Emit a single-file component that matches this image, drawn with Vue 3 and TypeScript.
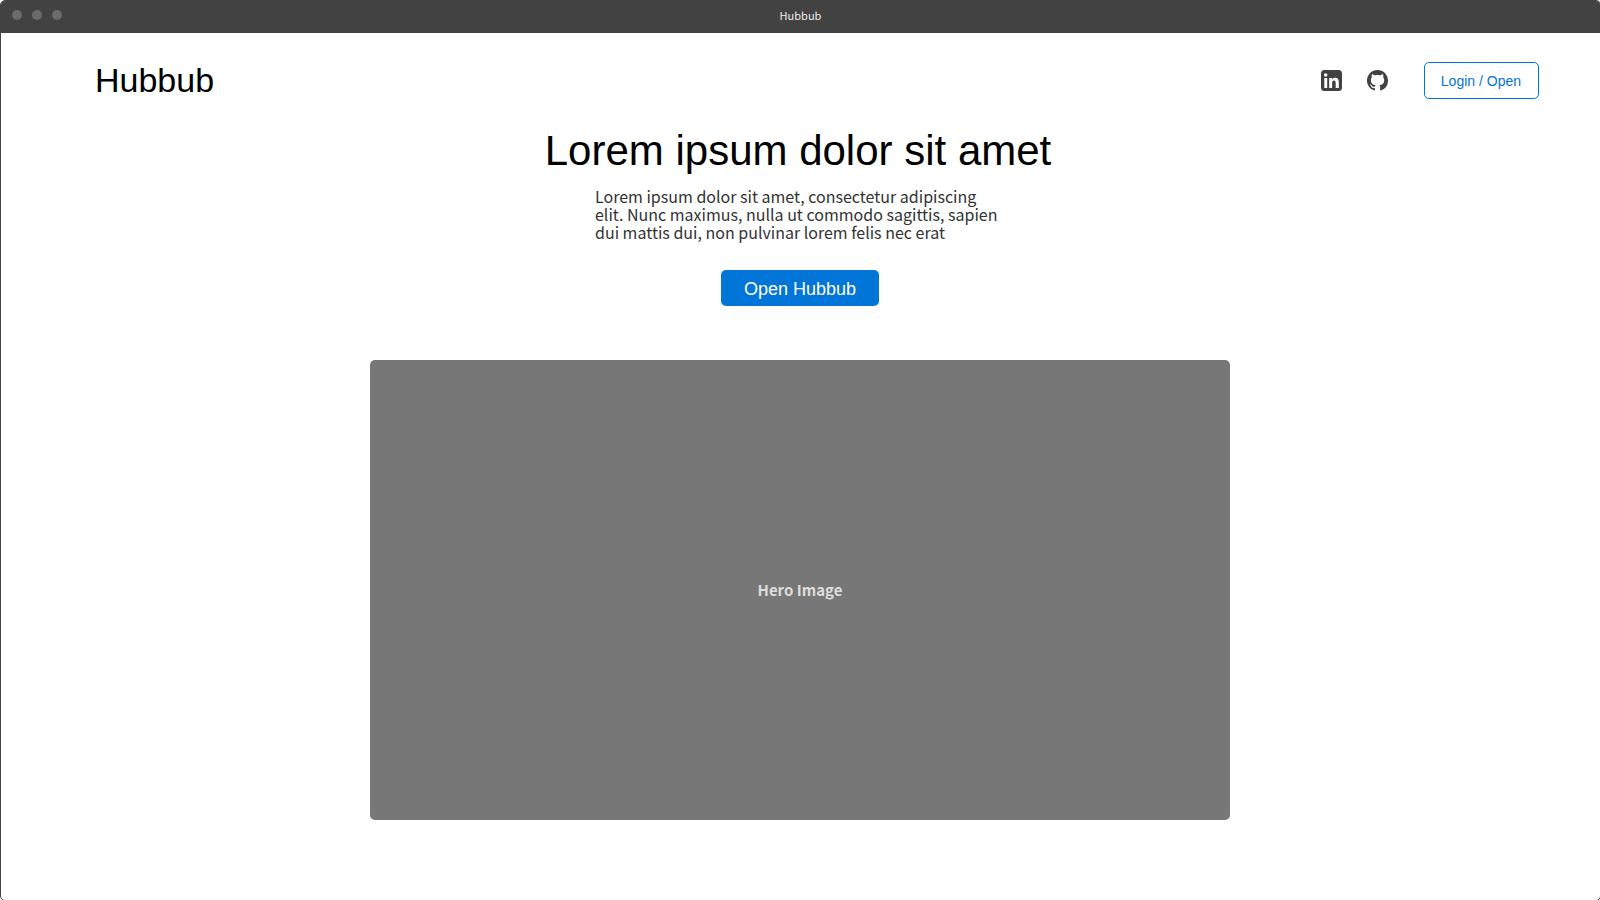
<script setup lang="ts">
const appName = 'Hubbub'
const windowControls: string[] = ['close', 'minimise', 'maximise']
</script>

<template>
  <div class="screen">
    <div class="window">
      <div class="titlebar">
        <div class="controls">
          <span v-for="control in windowControls" :key="control" class="dot"></span>
        </div>
        <span class="window-title">{{ appName }}</span>
      </div>

      <header class="header">
        <div class="brand">{{ appName }}</div>
        <nav class="links">
          <a class="icon-link" href="#linkedin" aria-label="LinkedIn">
            <svg viewBox="0 0 21 21" width="21" height="21" aria-hidden="true">
              <path
                fill="currentColor"
                fill-rule="evenodd"
                d="M3.500 0h14A3.500 3.500 0 0 1 21 3.500v14a3.500 3.500 0 0 1-3.500 3.500h-14A3.500 3.500 0 0 1 0 17.500v-14A3.500 3.500 0 0 1 3.500 0ZM3.300 8V18h2.900V8ZM4.700 3.200a1.750 1.750 0 1 0 0 3.500 1.750 1.750 0 0 0 0-3.500ZM8.200 8V18h2.900v-5.200c0-1.400.6-2.300 1.900-2.300s1.700 1 1.700 2.300V18h3.100v-5.800c0-2.900-1.400-4.400-3.600-4.400-1.500 0-2.500.7-3.100 1.600V8Z"
              />
            </svg>
          </a>
          <a class="icon-link" href="#github" aria-label="GitHub">
            <svg viewBox="0 0 16 16" width="21" height="21" aria-hidden="true">
              <path
                fill="currentColor"
                d="M8 0C3.58 0 0 3.58 0 8c0 3.54 2.290 6.530 5.470 7.590.4.070.550-.170.550-.380 0-.190-.010-.820-.010-1.490-2.010.370-2.530-.490-2.690-.940-.090-.230-.480-.940-.820-1.130-.280-.150-.680-.520-.010-.530.630-.010 1.080.580 1.230.820.720 1.210 1.870.870 2.330.660.070-.520.280-.870.510-1.070-1.780-.2-3.640-.890-3.640-3.950 0-.870.310-1.590.820-2.150-.080-.2-.360-1.020.080-2.120 0 0 .670-.210 2.200.820.640-.180 1.320-.270 2-.270s1.360.090 2 .270c1.530-1.040 2.200-.820 2.200-.820.440 1.100.160 1.920.080 2.120.510.560.820 1.270.820 2.150 0 3.070-1.870 3.750-3.650 3.950.290.250.540.730.540 1.480 0 1.070-.010 1.930-.010 2.200 0 .210.150.460.550.380A8.010 8.010 0 0 0 16 8c0-4.420-3.580-8-8-8Z"
              />
            </svg>
          </a>
          <button type="button" class="login">Login / Open</button>
        </nav>
      </header>

      <main class="hero">
        <h1 class="headline">Lorem ipsum dolor sit amet</h1>
        <p class="summary">
          Lorem ipsum dolor sit amet, consectetur adipiscing elit. Nunc maximus, nulla ut commodo
          sagittis, sapien dui mattis dui, non pulvinar lorem felis nec erat
        </p>
        <button type="button" class="open">Open Hubbub</button>
        <div class="hero-image">Hero Image</div>
      </main>
    </div>
  </div>
</template>

<style>
body {
  margin: 0;
  background: #ffffff;
}
</style>

<style scoped>
.screen {
  overflow: hidden;
  min-height: 100vh;
  display: flex;
  font-family: 'Liberation Sans', Arial, sans-serif;
}

.window {
  flex: 1;
  box-sizing: border-box;
  margin: 0 -1px -1px 0;
  border: 1px solid #424242;
  border-radius: 5px;
  background: #ffffff;
  overflow: hidden;
}

.titlebar {
  display: grid;
  grid-template-columns: 1fr auto 1fr;
  align-items: center;
  height: 32px;
  padding: 0 11px;
  background: #424242;
}

.controls {
  display: flex;
  gap: 10px;
  padding-bottom: 4px;
}

.dot {
  width: 10px;
  height: 10px;
  border-radius: 50%;
  background: #6b6b6b;
}

.window-title {
  padding-bottom: 4px;
  color: #eeeeee;
  font-family: 'Noto Sans CJK SC', sans-serif;
  font-size: 11px;
  line-height: 16px;
}

.header {
  display: flex;
  align-items: center;
  justify-content: space-between;
  padding: 28px 61px 0 94px;
}

.brand {
  font-size: 34px;
  line-height: 38px;
  color: #000000;
}

.links {
  display: flex;
  align-items: center;
}

.icon-link {
  display: flex;
  margin-right: 25px;
  color: #424242;
}

.login {
  box-sizing: border-box;
  height: 37px;
  margin-left: 11px;
  padding: 1px 17px 0 16px;
  border: 1px solid #0275d8;
  border-radius: 5px;
  background: #ffffff;
  color: #0275d8;
  font-family: inherit;
  font-size: 14px;
}

.hero {
  display: flex;
  flex-direction: column;
  align-items: center;
  padding: 28px 25px 78px 24px;
}

.headline {
  margin: 0;
  padding-right: 4px;
  font-size: 42px;
  line-height: 48px;
  font-weight: 400;
  color: #000000;
}

.summary {
  width: 410px;
  max-width: 100%;
  margin: 12px 0 0;
  font-family: 'Noto Sans CJK SC', sans-serif;
  font-size: 16px;
  line-height: 18px;
  color: #333333;
}

.open {
  height: 36px;
  margin-top: 29px;
  padding: 2px 23px 0;
  border: 0;
  border-radius: 5px;
  background: #0275d8;
  color: #ffffff;
  font-family: inherit;
  font-size: 18px;
}

.hero-image {
  display: flex;
  align-items: center;
  justify-content: center;
  box-sizing: border-box;
  width: 860px;
  max-width: 100%;
  aspect-ratio: 43 / 23;
  margin-top: 54px;
  padding-bottom: 2px;
  border-radius: 5px;
  background: #777777;
  color: #dddddd;
  font-family: 'Noto Sans CJK SC', sans-serif;
  font-size: 15px;
  font-weight: 700;
}
</style>
